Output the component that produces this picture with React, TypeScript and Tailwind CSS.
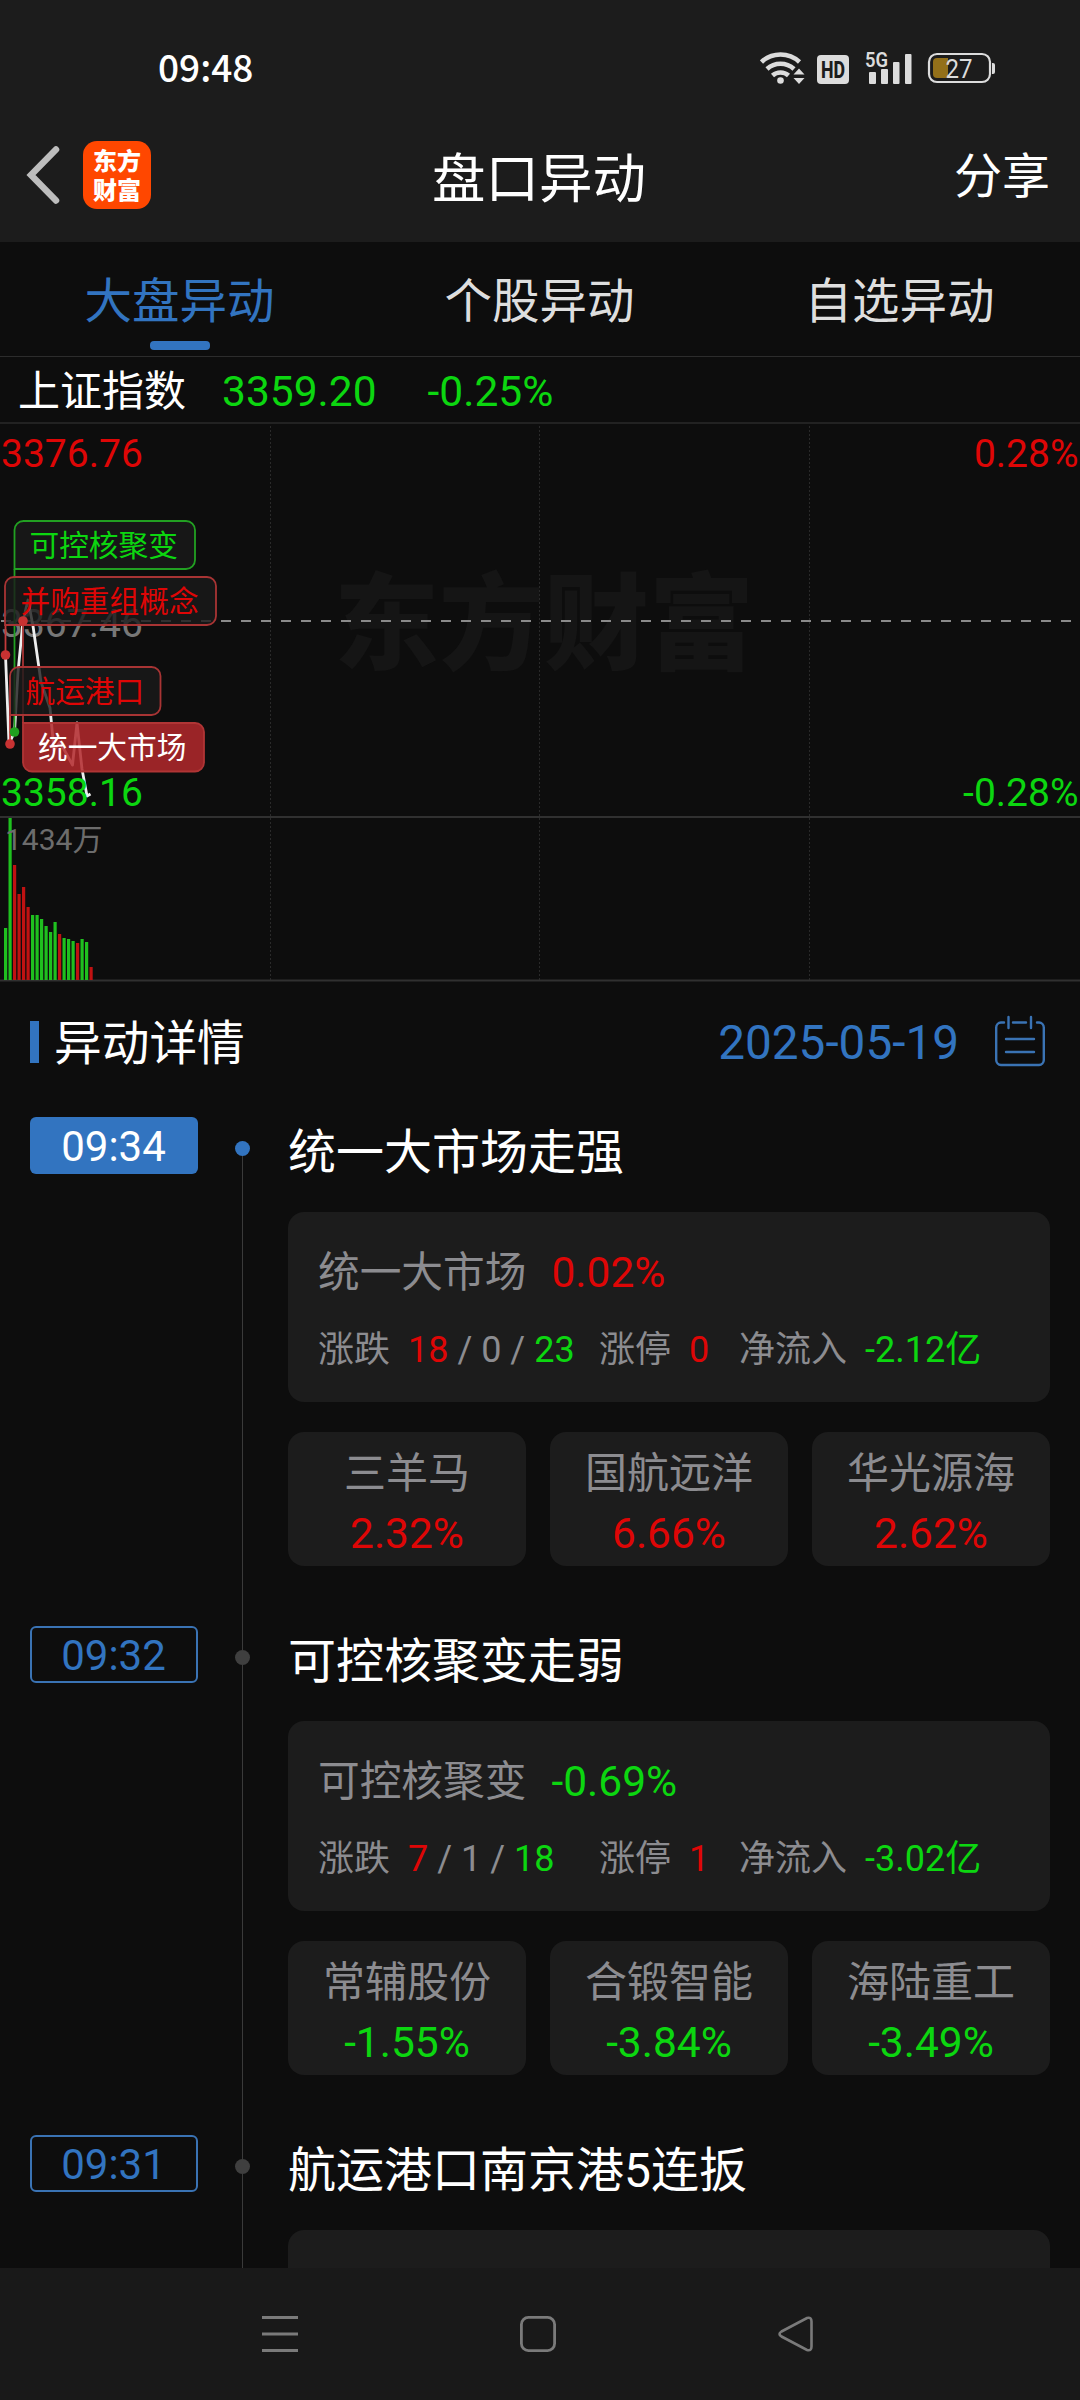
import clsx from 'clsx';

const TABS = ['大盘异动', '个股异动', '自选异动'];

const RED = '#de0606';
const GREEN = '#0cd610';

// minute volume bars: [top y inside the chart, rising]
const VOLUMES: [number, boolean][] = [
  [504, false], [394, false], [441, true], [470, true], [463, true], [483, true], [491, false],
  [491, false], [495, false], [502, false], [508, false], [498, false], [510, true], [514, false],
  [515, false], [517, false], [519, true], [515, false], [518, false], [543, true],
];

type Stock = { name: string; pct: string };
type Move = {
  time: string;
  title: string;
  board?: { name: string; pct: string; up: string; flat: string; down: string; limit: string; inflow: string };
  stocks?: Stock[];
};

const MOVES: Move[] = [
  {
    time: '09:34',
    title: '统一大市场走强',
    board: { name: '统一大市场', pct: '0.02%', up: '18', flat: '0', down: '23', limit: '0', inflow: '-2.12亿' },
    stocks: [
      { name: '三羊马', pct: '2.32%' },
      { name: '国航远洋', pct: '6.66%' },
      { name: '华光源海', pct: '2.62%' },
    ],
  },
  {
    time: '09:32',
    title: '可控核聚变走弱',
    board: { name: '可控核聚变', pct: '-0.69%', up: '7', flat: '1', down: '18', limit: '1', inflow: '-3.02亿' },
    stocks: [
      { name: '常辅股份', pct: '-1.55%' },
      { name: '合锻智能', pct: '-3.84%' },
      { name: '海陆重工', pct: '-3.49%' },
    ],
  },
  { time: '09:31', title: '航运港口南京港5连扳' },
];

const tone = (v: string) => (v.startsWith('-') ? 'text-[#0cd610]' : 'text-[#de0606]');

function StatusBar() {
  return (
    <div className="flex h-[136px] items-center justify-between pl-[158px] pr-[84px]">
      <span className="pb-[3px] font-['Noto_Sans_CJK_SC',sans-serif] text-[37px] font-medium leading-none text-white">09:48</span>
      <svg width="236" height="40" viewBox="0 0 236 40" className="fill-[#dcdcdc]">
        {/* wifi */}
        <g fill="none" stroke="#dcdcdc" strokeWidth="4.6">
          <path d="M1.500 14a28 28 0 0 1 38 0" />
          <path d="M7 21a20 20 0 0 1 27 0" />
          <path d="M12.500 27.500a12 12 0 0 1 16 0" />
        </g>
        <circle cx="20.5" cy="32.5" r="3.3" />
        <path d="M33.500 26.500h11l-5.500-6zM33.500 30h11l-5.500 6z" />
        {/* HD */}
        <rect x="57" y="7" width="32" height="29" rx="4" />
        <text x="73" y="29.500" textAnchor="middle" fill="#1c1c1c" fontSize="23" fontWeight="800" fontFamily="Roboto, sans-serif" textLength="24" lengthAdjust="spacingAndGlyphs">HD</text>
        {/* signal */}
        <text x="105" y="18.500" fontSize="21" fontWeight="600" fontFamily="Roboto, sans-serif" textLength="23" lengthAdjust="spacingAndGlyphs">5G</text>
        <rect x="109" y="24" width="7" height="12" rx="1" />
        <rect x="121" y="21" width="7" height="15" rx="1" />
        <rect x="133" y="14" width="6.500" height="22" rx="1" />
        <rect x="145" y="6" width="6.500" height="30" rx="1" />
        {/* battery */}
        <rect x="169" y="6" width="61" height="28" rx="8" fill="none" stroke="#dcdcdc" strokeWidth="2.200" />
        <path d="M177 10h11v20h-11a4 4 0 0 1-4-4v-12a4 4 0 0 1 4-4z" fill="#93701a" />
        <path d="M232 15h1a2 2 0 0 1 2 2v7a2 2 0 0 1-2 2h-1z" />
        <text x="199" y="29.500" textAnchor="middle" fontSize="26" fontFamily="Roboto, sans-serif" textLength="27" lengthAdjust="spacingAndGlyphs">27</text>
      </svg>
    </div>
  );
}

function TitleBar() {
  return (
    <div className="grid h-[106px] grid-cols-3 pl-[28px] pr-[30px]">
      <div className="-ml-[2px] flex items-start gap-[23px] pt-1">
        <svg width="34" height="58" viewBox="0 0 34 58" fill="none" stroke="#bdbdbd" strokeWidth="6.500" className="mt-[6px]">
          <path d="M30 3.500 5 29l25 25.500" strokeLinecap="round" />
        </svg>
        <div className="mt-px flex h-[68px] w-[68px] flex-col items-center justify-center rounded-[14px] bg-[#ff4700] pb-[3px] font-['Noto_Sans_CJK_SC',sans-serif] text-[24px] font-black leading-[29px] text-white">
          <span>东方</span>
          <span>财富</span>
        </div>
      </div>
      <h1 className="whitespace-nowrap pt-[17px] text-center text-[53.500px] leading-[54px] text-white">盘口异动</h1>
      <button className="justify-self-end self-start pt-[17px] text-[48px] leading-[48px] text-white">分享</button>
    </div>
  );
}

function Tabs() {
  return (
    <nav className="grid h-[115px] shrink-0 grid-cols-3 border-b border-[#2c2c2c]">
      {TABS.map((t, i) => (
        <div key={t} className="flex flex-col items-center pt-[36px]">
          <span className={clsx('mr-px text-[47.500px] leading-[48px]', i === 0 ? 'text-[#3274c0]' : 'text-[#dedede]')}>{t}</span>
          {i === 0 && <span className="mt-[15px] h-[9px] w-[60px] rounded-[4px] bg-[#3274c0]" />}
        </div>
      ))}
    </nav>
  );
}

/* Intraday line on top, minute volume below. One unit is one pixel. */
function IndexChart() {
  return (
    <svg width="1080" height="558" viewBox="0 0 1080 558" className="block shrink-0" fontFamily="Roboto, 'Noto Sans CJK SC', sans-serif">
      <text x="544" y="237" textAnchor="middle" fontSize="105" fontWeight="900" fill="#151515" fontFamily="'Noto Sans CJK SC', sans-serif">东方财富</text>

      {[270.5, 539.5, 809.5].map((x) => (
        <path key={x} d={`M${x} 2V557`} stroke="#2a2a2a" strokeDasharray="2 2" />
      ))}
      <path d="M1 197H1080" stroke="#8a8a8a" strokeWidth="2" strokeDasharray="10 10" />
      <path d="M0 393H1080M0 556.500H1080" stroke="#303030" strokeWidth="2" />

      <g fontSize="39">
        <text x="1" y="43" fill={RED}>3376.76</text>
        <text x="1078.500" y="43" textAnchor="end" fill={RED}>0.28%</text>
        <text x="1" y="213" fill="#777">3367.46</text>
        <text x="1078.500" y="382" textAnchor="end" fill={GREEN}>-0.28%</text>
      </g>

      {VOLUMES.map(([top, rising], i) => (
        <rect key={i} x={4 + i * 4.5} y={top} width="3.2" height={556 - top} fill={rising ? '#c01212' : '#1fc01f'} />
      ))}
      <text x="5" y="426" fontSize="30" fill="#6c6c6c">1434万</text>

      <path d="M5.500 231 9 320 14.500 308 18 248 23 197 28 176 33 202 41 258 50 284 54 326 60 318 72.500 341 77 299 82 345 87 372 90.500 370" fill="none" stroke="#eee" strokeWidth="2.800" strokeLinejoin="round" />
      <text x="1" y="382" fontSize="39" fill={GREEN}>3358.16</text>

      <g strokeWidth="1.800" fill="#1a1a1a" fillOpacity="0.8">
        <path d="M14.500 145V308" stroke="#22a022" />
        <path d="M14.500 145V106a9 9 0 0 1 9-9H186a9 9 0 0 1 9 9V136a9 9 0 0 1-9 9z" stroke="#22a022" />
        <path d="M5.500 201V231" stroke="#c43b3b" />
        <path d="M5 201V162a9 9 0 0 1 9-9H207a9 9 0 0 1 9 9V192a9 9 0 0 1-9 9z" stroke="#a83434" />
        <path d="M23 197V299" stroke="#a83434" />
        <path d="M10 291V320" stroke="#c43b3b" />
        <path d="M10 291V252a9 9 0 0 1 9-9H151.500a9 9 0 0 1 9 9V282a9 9 0 0 1-9 9z" stroke="#a83434" />
        <path d="M23 299H195a9 9 0 0 1 9 9V338.500a9 9 0 0 1-9 9H32a9 9 0 0 1-9-9z" fill="#b2292c" fillOpacity="0.86" stroke="#b03535" />
      </g>
      <circle cx="5.500" cy="231" r="4.800" fill="#c83232" />
      <circle cx="10" cy="320" r="4.800" fill="#c83232" />
      <circle cx="14.500" cy="308" r="4.800" fill="#1fa01f" />
      <circle cx="23" cy="197" r="4.800" fill="#c83232" />

      <g fontSize="29.700">
        <text x="29.500" y="131.500" fill={GREEN}>可控核聚变</text>
        <text x="20.500" y="187.500" fill={RED}>并购重组概念</text>
        <text x="25.500" y="277.500" fill={RED}>航运港口</text>
        <text x="38" y="333.500" fill="#fff">统一大市场</text>
      </g>
    </svg>
  );
}

function CalendarIcon() {
  return (
    <svg width="50" height="52" viewBox="0 0 50 52" fill="none" stroke="#3a73b4" strokeWidth="2.400" strokeLinecap="round" className="-mt-[2px]">
      <path d="M9 7.500H6A5 5 0 0 0 1.200 12.500V45A5 5 0 0 0 6 50H44A5 5 0 0 0 48.800 45V12.500A5 5 0 0 0 44 7.500H42M18 7.500H31" />
      <path d="M13.500 2V13M36 2V13M11 24H39M11 37H39" />
    </svg>
  );
}

function BoardCard({ board }: { board: NonNullable<Move['board']> }) {
  return (
    <div className="h-[190px] rounded-2xl bg-[#1c1c1c] px-[30px] pt-[38px] text-[#8c8c90]">
      <div className="flex items-center gap-[25px] text-[41.700px] leading-[46px]">
        <span>{board.name}</span>
        <span className={clsx('text-[42.500px]', tone(board.pct))}>{board.pct}</span>
      </div>
      <div className="mt-[34px] flex items-center text-[36px] leading-[40px] whitespace-pre">
        <div className="flex w-[281px] items-center">
          <span className="mr-[18px]">涨跌</span>
          <span className="text-[#de0606]">{board.up}</span>
          <span> / {board.flat} / </span>
          <span className="text-[#0cd610]">{board.down}</span>
        </div>
        <div className="flex w-[140px] items-center">
          <span className="mr-[18px]">涨停</span>
          <span className="text-[#de0606]">{board.limit}</span>
        </div>
        <span className="mr-[18px]">净流入</span>
        <span className={tone(board.inflow)}>{board.inflow}</span>
      </div>
    </div>
  );
}

function MoveItem({ move, active }: { move: Move; active: boolean }) {
  return (
    <li className="flex h-[509px] shrink-0">
      <div
        className={clsx(
          'flex h-[57px] w-[168px] items-center justify-center rounded-md pr-px pt-[3px] text-[42px] leading-none',
          active ? 'bg-[#3274c0] text-white' : 'border-2 border-[#3a73b4] text-[#3274c0]',
        )}>
        {move.time}
      </div>
      <div className="mr-px flex w-[89px] flex-col items-center">
        <span className={clsx('h-[24px] w-px', !active && 'bg-[#3a3a3a]')} />
        <span className={clsx('size-[15px] rounded-full', active ? 'bg-[#3274c0]' : 'bg-[#3f3f3f]')} />
        <span className="w-px grow bg-[#3a3a3a]" />
      </div>
      <div className="w-[762px]">
        <h3 className="pt-[12px] text-[48px] leading-[48px] text-white">{move.title}</h3>
        <div className="mt-[35px]">
          {move.board ? <BoardCard board={move.board} /> : <div className="h-[190px] rounded-2xl bg-[#1c1c1c]" />}
        </div>
        {move.stocks && (
          <div className="mt-[30px] grid grid-cols-3 gap-6">
            {move.stocks.map((s) => (
              <div key={s.name} className="flex h-[134px] flex-col items-center rounded-2xl bg-[#1c1c1c] pt-[19px]">
                <span className="text-[42px] leading-[46px] text-[#8c8c90]">{s.name}</span>
                <span className={clsx('mt-[14px] text-[42.500px] leading-[46px]', tone(s.pct))}>{s.pct}</span>
              </div>
            ))}
          </div>
        )}
      </div>
    </li>
  );
}

function SystemNav() {
  return (
    <footer className="grid h-[132px] shrink-0 grid-cols-[262px_258px_258px_1fr] items-center bg-[#191919]">
      <span />
      <svg width="36" height="38" viewBox="0 0 36 38" stroke="#7a7a7a" strokeWidth="2.800">
        <path d="M0 2.500H36M0 19H36M0 35.500H36" />
      </svg>
      <svg width="36" height="36" viewBox="0 0 36 36" fill="none" stroke="#7a7a7a" strokeWidth="2.800">
        <rect x="1.400" y="1.400" width="33.200" height="33.200" rx="7" />
      </svg>
      <svg width="36" height="36" viewBox="0 0 36 36" fill="none" stroke="#7a7a7a" strokeWidth="2.600">
        <path d="M3.500 15.500 29 2Q33.500 .800 33.500 5.500V30.500Q33.500 35.200 29 34L3.500 20.500Q-.500 18 3.500 15.500z" />
      </svg>
    </footer>
  );
}

export default function App() {
  return (
    <div className="flex h-[2400px] w-[1080px] flex-col overflow-hidden bg-[#0d0d0d] font-[Roboto,'Noto_Sans_CJK_SC',sans-serif]">
      <header className="h-[242px] shrink-0 bg-[#1c1c1c]">
        <StatusBar />
        <TitleBar />
      </header>
      <Tabs />
      <div className="flex h-[67px] shrink-0 items-center border-b-2 border-[#222] pl-[18px] pt-[5px] text-[42px] leading-none">
        <span className="text-white">上证指数</span>
        <span className="ml-[36px] text-[42.500px] text-[#0cd610]">3359.20</span>
        <span className="ml-[51px] text-[42.500px] text-[#0cd610]">-0.25%</span>
      </div>
      <IndexChart />
      <section className="flex min-h-0 grow flex-col overflow-hidden px-[30px]">
        <div className="flex h-[135px] shrink-0 items-center justify-between pb-[14px] pr-[5px]">
          <div className="flex items-center">
            <span className="h-[42px] w-[9px] bg-[#3274c0]" />
            <h2 className="ml-[15px] pt-[4px] text-[47.700px] leading-none text-white">异动详情</h2>
          </div>
          <div className="flex items-center gap-9">
            <span className="pt-[3px] text-[47.700px] leading-none text-[#3274c0]">2025-05-19</span>
            <CalendarIcon />
          </div>
        </div>
        <ul className="flex flex-col">
          {MOVES.map((m, i) => (
            <MoveItem key={m.time} move={m} active={i === 0} />
          ))}
        </ul>
      </section>
      <SystemNav />
    </div>
  );
}
